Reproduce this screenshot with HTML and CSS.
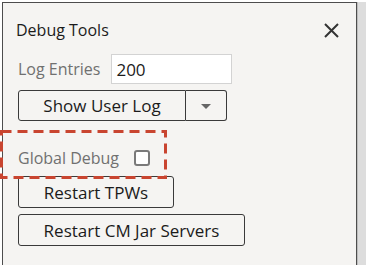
FILE: index.html
```html
<!DOCTYPE html>
<html lang="en">
<head>
    <meta charset="UTF-8">
    <title>Debug Tools</title>
    <link rel="stylesheet" href="styles.css">
</head>
<body>
    <div class="frame">
        <div class="panel">
            <div class="panel-head">
                <h2>Debug Tools</h2>
                <button class="close" title="Close">
                    <svg width="15" height="15" viewBox="0 0 15 15"><path d="M1 1 L14 14 M14 1 L1 14" stroke="#333" stroke-width="2" fill="none"/></svg>
                </button>
            </div>

            <div class="row log-row">
                <label for="logEntries">Log Entries</label>
                <input id="logEntries" type="text" value="200">
            </div>

            <div class="row split">
                <button class="btn show-log">Show User Log</button>
                <button class="btn drop">
                    <svg width="10" height="6" viewBox="0 0 10 6"><path d="M0 0 L10 0 L5 5 Z" fill="#666"/></svg>
                </button>
            </div>

            <div class="row debug-row">
                <span class="debug-label">Global Debug</span>
                <span class="check"></span>
            </div>

            <button class="btn tpw">Restart TPWs</button>
            <button class="btn cm">Restart CM Jar Servers</button>
        </div>
        <div class="scroll-edge"></div>

        <svg class="highlight" width="168" height="50" viewBox="0 0 168 50">
            <rect x="1.5" y="1.5" width="164" height="46" fill="none" stroke="#c94530" stroke-width="3" stroke-dasharray="10 6"/>
        </svg>
    </div>
</body>
</html>
```

FILE: styles.css
```css
body {
    margin: 0;
    padding: 0;
    background: #ffffff;
    font-family: "Open Sans", Arial, sans-serif;
    font-size: 16px;
    color: #1b1b1b;
}
.frame {
    position: relative;
    display: flex;
    padding: 2px 0 0 2px;
    height: 263px;
}
.panel {
    width: 355px;
    border: 1px solid #4d4d4d;
    border-bottom: none;
    background: #f5f4f2;
    padding: 0 0 0 15px;
    box-sizing: border-box;
    display: flex;
    flex-direction: column;
    align-items: flex-start;
}
.scroll-edge {
    flex: 1;
    background: #dddddd;
    border-left: 1px solid #bdbdbd;
}
.panel-head {
    width: 100%;
    display: flex;
    justify-content: space-between;
    align-items: center;
    padding: 16px 15px 0 0;
    margin-left: -2px;
    box-sizing: border-box;
}
h2 {
    margin: 0;
    font-size: 16px;
    font-weight: normal;
    line-height: 22px;
    color: #1b1b1b;
}
.close {
    border: none;
    background: none;
    padding: 0;
    width: 15px;
    height: 15px;
    display: flex;
}
.row {
    display: flex;
    align-items: center;
}
.log-row {
    margin-top: 13px;
    gap: 11px;
}
label, .debug-label {
    color: #707070;
    font-size: 16px;
}
input {
    width: 121px;
    height: 30px;
    box-sizing: border-box;
    border: 1px solid #d3d3d3;
    background: #fff;
    font-family: inherit;
    font-size: 17px;
    color: #1b1b1b;
    padding: 0 4px;
}
.btn {
    font-family: inherit;
    font-size: 17px;
    color: #1b1b1b;
    background: #f5f4f2;
    border: 1px solid #3a3a3a;
    border-radius: 3px;
    height: 31px;
    padding: 0;
}
.split {
    margin-top: 6px;
}
.show-log {
    width: 168px;
    border-radius: 3px 0 0 3px;
}
.drop {
    width: 41px;
    border-left: none;
    border-radius: 0 3px 3px 0;
    display: flex;
    align-items: center;
    justify-content: center;
    padding-top: 2px;
}
.debug-row {
    margin-top: 26px;
    gap: 15px;
}
.check {
    width: 12px;
    height: 12px;
    border: 2px solid #7a7a7a;
    border-radius: 3px;
    background: #fff;
}
.tpw {
    margin-top: 7px;
    width: 156px;
    height: 32px;
}
.cm {
    margin-top: 6px;
    width: 227px;
    height: 32px;
}
.highlight {
    position: absolute;
    left: 0;
    top: 130px;
}
```
